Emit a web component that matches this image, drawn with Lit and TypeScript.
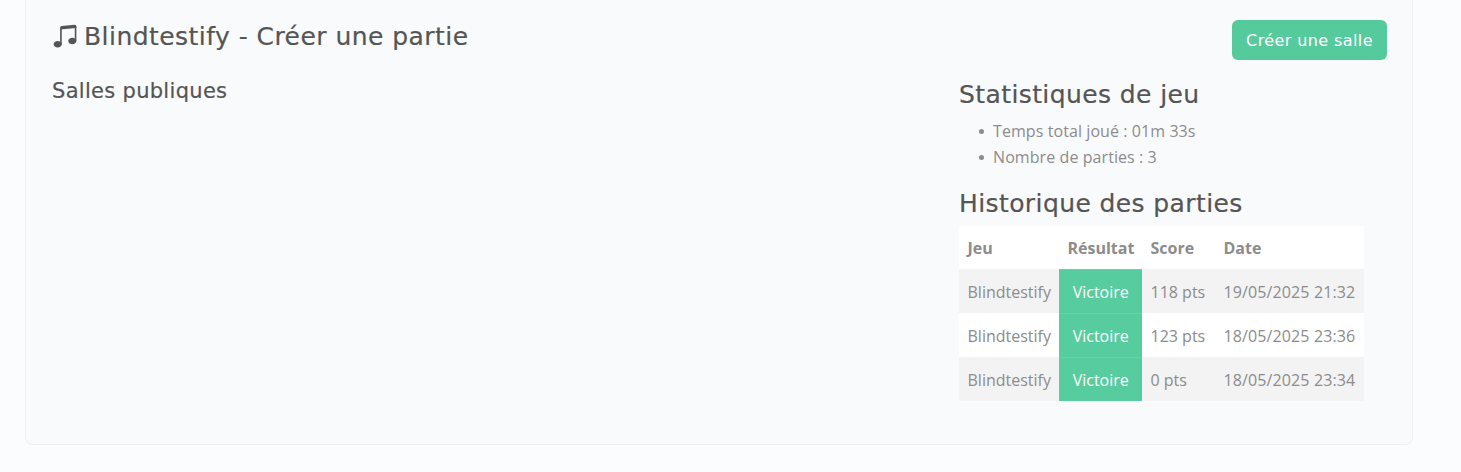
import { LitElement, html, css } from "lit";
import { customElement } from "lit/decorators.js";

const rows = [
  ["Blindtestify", "Victoire", "118 pts", "19/05/2025 21:32"],
  ["Blindtestify", "Victoire", "123 pts", "18/05/2025 23:36"],
  ["Blindtestify", "Victoire", "0 pts", "18/05/2025 23:34"],
];

@customElement("app-root")
export class AppRoot extends LitElement {
  static styles = css`
    :host {
      display: block;
      height: 472px;
      overflow: hidden;
      background: #fbfcfe;
      box-sizing: border-box;
      padding: 0 48px 0 25px;
      font-family: "Open Sans", "Noto Sans", sans-serif;
      color: #8c8c8c;
    }
    .card {
      height: 445px;
      box-sizing: border-box;
      border: 1px solid #eff0f2;
      border-top: none;
      border-radius: 0 0 8px 8px;
      background: #f9fafc;
      padding: 20px 25px 0 26px;
    }
    .top {
      display: flex;
      justify-content: space-between;
      align-items: flex-start;
      height: 40px;
    }
    h1, h2, h3 {
      margin: 0;
      font-family: "DejaVu Sans", sans-serif;
      font-weight: 400;
      color: #555555;
      -webkit-text-stroke: 0.2px #555555;
    }
    h1 {
      font-size: 25px;
      line-height: 32px;
      letter-spacing: 0.45px;
      display: flex;
      align-items: flex-start;
      gap: 6px;
    }
    h1 span { padding-top: 1px; }
    .note { width: 26px; height: 26px; flex: none; margin-top: 3px; }
    .btn {
      width: 155px;
      height: 40px;
      border: none;
      border-radius: 6px;
      background: #55cb9d;
      color: #ffffff;
      font-family: "DejaVu Sans", sans-serif;
      font-size: 16px;
      letter-spacing: 0.4px;
      padding: 0;
    }
    .cols {
      display: grid;
      grid-template-columns: 907px 428px;
      margin-top: 18px;
    }
    h2 {
      font-size: 21px;
      line-height: 26px;
      letter-spacing: 0.3px;
    }
    h3 {
      font-size: 25px;
      line-height: 32px;
      letter-spacing: 0.4px;
      padding-top: 1px;
    }
    ul {
      margin: 7px 0 0;
      padding: 0 0 0 20px;
      list-style: none;
      font-size: 16px;
      line-height: 26px;
      letter-spacing: 0.08px;
    }
    li { display: flex; align-items: center; gap: 9px; }
    li::before {
      content: "";
      width: 5px;
      height: 5px;
      border-radius: 50%;
      background: #8c8c8c;
      flex: none;
    }
    .hist { margin-top: 17px; }
    table {
      border-collapse: collapse;
      table-layout: fixed;
      width: 405px;
      margin-top: 6px;
      font-size: 16px;
    }
    th, td { padding: 0 8px 0 8.5px; text-align: left; white-space: nowrap; }
    th { font-weight: 700; height: 43px; background: #ffffff; }
    td { height: 42px; padding-top: 2px; background: #ffffff; }
    td.date { letter-spacing: 0.12px; }
    tbody tr:nth-child(odd) td { background: #f3f3f3; }
    tbody td.win, tbody tr:nth-child(odd) td.win {
      background: #57cc9e;
      color: #ffffff;
      text-align: center;
      box-shadow: inset 0 1px 0 #67d1a7;
    }
    th.res { text-align: center; }
    .c1 { width: 100px; }
    .c2 { width: 83px; }
    .c3 { width: 73px; }
    .c4 { width: 149px; }
  `;

  render() {
    return html`
      <div class="card">
        <div class="top">
          <h1>
            <svg class="note" viewBox="0 0 16 16" fill="#555555">
              <path d="M6 13c0 1.105-1.12 2-2.5 2S1 14.105 1 13s1.12-2 2.5-2 2.5.895 2.5 2zm9-2c0 1.105-1.12 2-2.5 2s-2.5-.895-2.5-2 1.12-2 2.5-2 2.5.895 2.5 2z"/>
              <path fill-rule="evenodd" d="M14 11V2h1v9h-1zM6 3v10H5V3h1z"/>
              <path d="M5 2.905a1 1 0 0 1 .9-.995l8-.8a1 1 0 0 1 1.1.995V3L5 4V2.905z"/>
            </svg>
            <span>Blindtestify - Créer une partie</span>
          </h1>
          <button class="btn">Créer une salle</button>
        </div>
        <div class="cols">
          <div><h2>Salles publiques</h2></div>
          <div>
            <h3>Statistiques de jeu</h3>
            <ul>
              <li>Temps total joué : 01m 33s</li>
              <li>Nombre de parties : 3</li>
            </ul>
            <h3 class="hist">Historique des parties</h3>
            <table>
              <colgroup>
                <col class="c1" /><col class="c2" /><col class="c3" /><col class="c4" />
              </colgroup>
              <thead>
                <tr><th>Jeu</th><th class="res">Résultat</th><th>Score</th><th>Date</th></tr>
              </thead>
              <tbody>
                ${rows.map(
                  (r) => html`<tr><td>${r[0]}</td><td class="win">${r[1]}</td><td>${r[2]}</td><td class="date">${r[3]}</td></tr>`
                )}
              </tbody>
            </table>
          </div>
        </div>
      </div>
    `;
  }
}
